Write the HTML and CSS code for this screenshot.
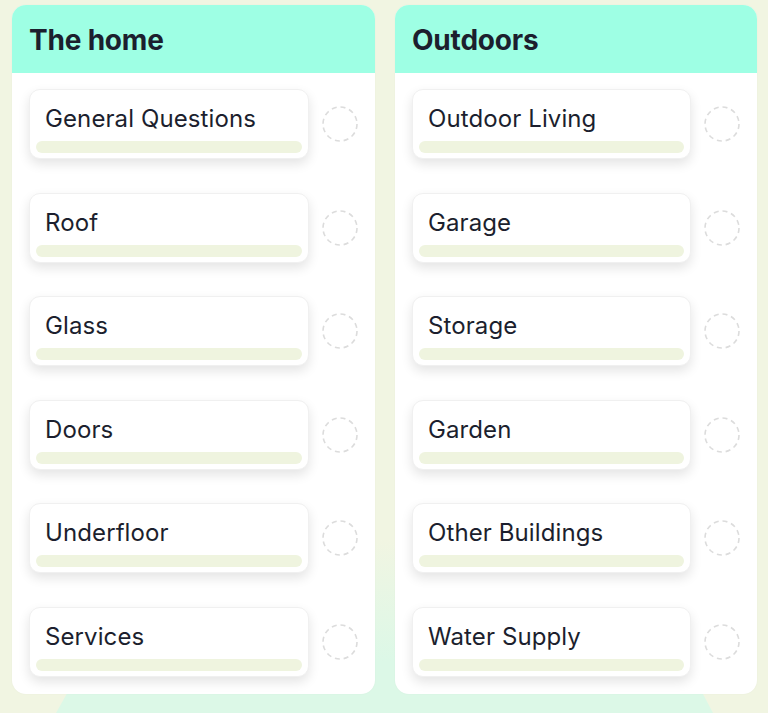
FILE: index.html
```html
<!DOCTYPE html>
<html lang="en">
  <head>
    <meta charset="UTF-8" />
    <meta name="viewport" content="width=device-width, initial-scale=1.0" />
    <title>Inspection areas</title>
    <link rel="stylesheet" href="styles.css">
  </head>
  <body>
    <div class="backdrop" aria-hidden="true"></div>
    <main class="board">
      <section class="panel">
        <header class="panel-head"><h2>The home</h2></header>
        <ul class="rows">
          <li class="row">
            <div class="tile"><span class="tile-name">General Questions</span><span class="bar"></span></div>
            <svg class="check" viewBox="0 0 36 36"><circle cx="18" cy="18" r="17" /></svg>
          </li>
          <li class="row">
            <div class="tile"><span class="tile-name">Roof</span><span class="bar"></span></div>
            <svg class="check" viewBox="0 0 36 36"><circle cx="18" cy="18" r="17" /></svg>
          </li>
          <li class="row">
            <div class="tile"><span class="tile-name">Glass</span><span class="bar"></span></div>
            <svg class="check" viewBox="0 0 36 36"><circle cx="18" cy="18" r="17" /></svg>
          </li>
          <li class="row">
            <div class="tile"><span class="tile-name">Doors</span><span class="bar"></span></div>
            <svg class="check" viewBox="0 0 36 36"><circle cx="18" cy="18" r="17" /></svg>
          </li>
          <li class="row">
            <div class="tile"><span class="tile-name">Underfloor</span><span class="bar"></span></div>
            <svg class="check" viewBox="0 0 36 36"><circle cx="18" cy="18" r="17" /></svg>
          </li>
          <li class="row">
            <div class="tile"><span class="tile-name">Services</span><span class="bar"></span></div>
            <svg class="check" viewBox="0 0 36 36"><circle cx="18" cy="18" r="17" /></svg>
          </li>
        </ul>
      </section>
      <section class="panel">
        <header class="panel-head"><h2>Outdoors</h2></header>
        <ul class="rows">
          <li class="row">
            <div class="tile"><span class="tile-name">Outdoor Living</span><span class="bar"></span></div>
            <svg class="check" viewBox="0 0 36 36"><circle cx="18" cy="18" r="17" /></svg>
          </li>
          <li class="row">
            <div class="tile"><span class="tile-name">Garage</span><span class="bar"></span></div>
            <svg class="check" viewBox="0 0 36 36"><circle cx="18" cy="18" r="17" /></svg>
          </li>
          <li class="row">
            <div class="tile"><span class="tile-name">Storage</span><span class="bar"></span></div>
            <svg class="check" viewBox="0 0 36 36"><circle cx="18" cy="18" r="17" /></svg>
          </li>
          <li class="row">
            <div class="tile"><span class="tile-name">Garden</span><span class="bar"></span></div>
            <svg class="check" viewBox="0 0 36 36"><circle cx="18" cy="18" r="17" /></svg>
          </li>
          <li class="row">
            <div class="tile"><span class="tile-name">Other Buildings</span><span class="bar"></span></div>
            <svg class="check" viewBox="0 0 36 36"><circle cx="18" cy="18" r="17" /></svg>
          </li>
          <li class="row">
            <div class="tile"><span class="tile-name">Water Supply</span><span class="bar"></span></div>
            <svg class="check" viewBox="0 0 36 36"><circle cx="18" cy="18" r="17" /></svg>
          </li>
        </ul>
      </section>
    </main>
  </body>
</html>
```

FILE: styles.css
```css
*,
*::before,
*::after {
  box-sizing: border-box;
}
:root {
  --clr-cream: #f1f5e2;
  --clr-mint: #9effe4;
  --clr-mint-soft: #dcf8e7;
  --clr-ink: #1c1f2e;
  --clr-track: #eff4df;
  --ff-base: Inter, "Noto Sans", sans-serif;
}
body {
  position: relative;
  height: 713px;
  margin: 0;
  font-family: var(--ff-base);
  color: var(--clr-ink);
  background-color: var(--clr-cream);
  overflow: hidden;
}
.backdrop {
  position: absolute;
  inset: 540px 0 0 0;
  background: linear-gradient(to bottom, var(--clr-cream) 0%, var(--clr-mint-soft) 70%);
  clip-path: polygon(153px 0, 622px 0, 713px 173px, 56px 173px);
}
.board {
  position: relative;
  display: grid;
  grid-template-columns: 363px 362px;
  gap: 20px;
  padding: 5px 11px 0 12px;
}
.panel {
  background-color: #fff;
  border-radius: 14px;
  overflow: hidden;
  box-shadow: 0 0 2px rgba(0, 0, 0, 0.04);
}
.panel-head {
  display: flex;
  align-items: center;
  height: 68px;
  padding: 1px 17px 0;
  background-color: var(--clr-mint);
}
.panel-head h2 {
  margin: 0;
  font-size: 28px;
  font-weight: 700;
  letter-spacing: -0.2px;
}
.rows {
  list-style: none;
  margin: 0;
  padding: 16px 17px 17px;
  display: flex;
  flex-direction: column;
  gap: 33.6px;
}
.row {
  display: flex;
  align-items: center;
  gap: 13px;
}
.tile {
  display: flex;
  flex-direction: column;
  width: 280px;
  height: 70px;
  padding: 14px 6px 5px;
  border-radius: 11px;
  background-color: #fff;
  border: 1px solid #f0f0f0;
  box-shadow: 0 5px 12px rgba(0, 0, 0, 0.11);
}
.tile-name {
  padding-left: 9px;
  font-size: 24px;
  line-height: 29px;
  letter-spacing: 0.1px;
}
.bar {
  margin-top: auto;
  height: 12px;
  border-radius: 6px;
  background-color: var(--clr-track);
}
.check {
  width: 36px;
  height: 36px;
  flex: none;
}
.check circle {
  fill: none;
  stroke: #dcdcdc;
  stroke-width: 1.6;
  stroke-dasharray: 5 3.9;
}
```
